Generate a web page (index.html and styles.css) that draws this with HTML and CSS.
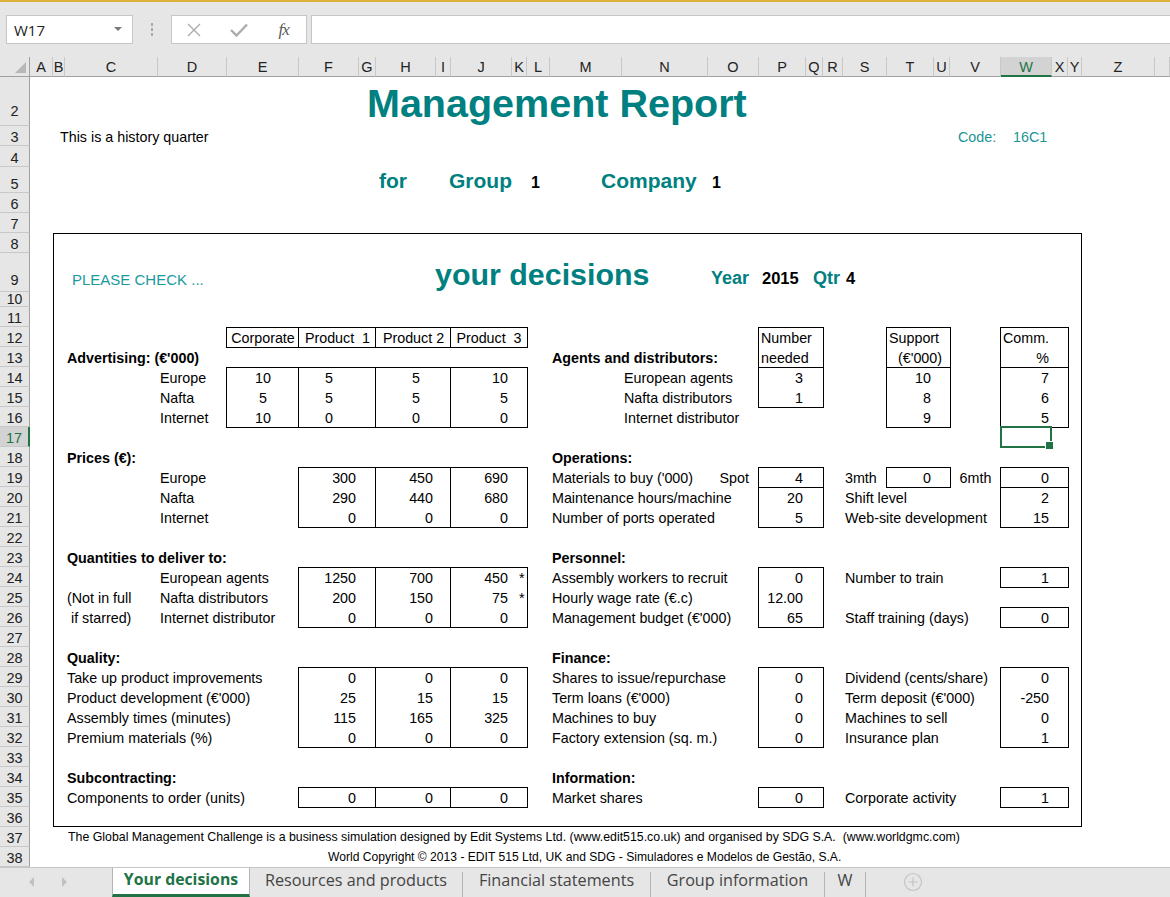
FILE: index.html
```html
<!DOCTYPE html>
<html lang="en">
<head>
<meta charset="utf-8">
<title>Management Report</title>
<link rel="stylesheet" href="styles.css">
</head>
<body>
<div class="app">
  <div class="topbar">
    <div class="namebox"><span>W17</span><svg width="8" height="5" viewBox="0 0 8 5"><polygon points="0,0 8,0 4,4" fill="#7a7a7a"/></svg></div>
    <div class="grip"><i></i><i></i><i></i></div>
    <div class="fxbtns">
      <span class="fxb"><svg width="14" height="14" viewBox="0 0 14 14"><path d="M1 1 L13 13 M13 1 L1 13" stroke="#ababab" stroke-width="1.4" fill="none"/></svg></span>
      <span class="fxb"><svg width="18" height="14" viewBox="0 0 18 14"><path d="M1 7 L6.5 12.5 L17 1.5" stroke="#ababab" stroke-width="2.4" fill="none"/></svg></span>
      <span class="fxb fx">fx</span>
    </div>
    <div class="formula"></div>
  </div>

  <div class="sheet">
    <div class="corner"><svg width="30" height="19" viewBox="0 0 30 19"><polygon points="26,5 26,16 15,16" fill="#b7b7b7"/></svg></div>
    <div class="colheads">
      <div>A</div><div>B</div><div>C</div><div>D</div><div>E</div><div>F</div><div>G</div><div>H</div><div>I</div><div>J</div><div>K</div><div>L</div><div>M</div><div>N</div><div>O</div><div>P</div><div>Q</div><div>R</div><div>S</div><div>T</div><div>U</div><div>V</div><div class="selc">W</div><div>X</div><div>Y</div><div>Z</div><div></div>
    </div>
    <div class="rowheads">
      <div class="rh2">2</div><div>3</div><div>4</div><div>5</div><div>6</div><div>7</div><div>8</div><div class="rh9">9</div><div class="rh10">10</div>
      <div>11</div><div>12</div><div>13</div><div>14</div><div>15</div><div>16</div><div class="selr">17</div><div>18</div><div>19</div><div>20</div>
      <div>21</div><div>22</div><div>23</div><div>24</div><div>25</div><div>26</div><div>27</div><div>28</div><div>29</div><div>30</div>
      <div>31</div><div>32</div><div>33</div><div>34</div><div>35</div><div>36</div><div>37</div><div>38</div>
    </div>

    <div class="cells">
      <div class="bigbox"></div>

      <div class="title">Management Report</div>
      <div class="l r3 cB hist">This is a history quarter</div>
      <div class="l r3 cV code">Code:</div>
      <div class="l r3 cW code c16">16C1</div>

      <div class="big5 cH p-for">for</div>
      <div class="big5 cI p-grp">Group</div>
      <div class="n5 cL">1</div>
      <div class="big5 cM p-cmp">Company</div>
      <div class="n5 cO">1</div>

      <div class="chk">PLEASE CHECK ...</div>
      <div class="yd">your decisions</div>
      <div class="yq cO p-year">Year</div>
      <div class="yn cP p-2015">2015</div>
      <div class="yq cQ p-qtr">Qtr</div>
      <div class="yn cS p-4">4</div>

      <!-- Advertising / Agents -->
      <div class="box hdr4 r12">
        <span class="ctr dv">Corporate</span><span class="ctr dv">Product  1</span><span class="ctr dv">Product 2</span><span class="ctr">Product  3</span>
      </div>
      <div class="box pq r12 h4"><span class="hl">Number</span><span class="hl dvb">needed</span><span>3</span><span>1</span></div>
      <div class="box tu r12 h5"><span class="hl">Support</span><span class="hc dvb">(€'000)</span><span>10</span><span>8</span><span>9</span></div>
      <div class="box wx r12 h5"><span class="hl">Comm.</span><span class="dvb">%</span><span>7</span><span>6</span><span>5</span></div>

      <div class="l hd cC r13">Advertising: (€'000)</div>
      <div class="l hd cM r13">Agents and distributors:</div>
      <div class="l cD r14">Europe</div>
      <div class="l cD r15">Nafta</div>
      <div class="l cD r16">Internet</div>
      <div class="box adv r14 h3">
        <span>10</span><span>5</span><span>5</span><span>10</span>
        <span>5</span><span>5</span><span>5</span><span>5</span>
        <span>10</span><span>0</span><span>0</span><span>0</span>
      </div>
      <div class="l cN r14">European agents</div>
      <div class="l cN r15">Nafta distributors</div>
      <div class="l cN r16">Internet distributor</div>

      <div class="sel cW r17"></div>

      <!-- Prices / Operations -->
      <div class="l hd cC r18">Prices (€):</div>
      <div class="l hd cM r18">Operations:</div>
      <div class="l cD r19">Europe</div>
      <div class="l cD r20">Nafta</div>
      <div class="l cD r21">Internet</div>
      <div class="box p3 r19 h3">
        <span>300</span><span>450</span><span>690</span>
        <span>290</span><span>440</span><span>680</span>
        <span>0</span><span>0</span><span>0</span>
      </div>
      <div class="l cM r19">Materials to buy ('000)</div>
      <div class="l cM r20">Maintenance hours/machine</div>
      <div class="l cM r21">Number of ports operated</div>
      <div class="l cO r19 spot">Spot</div>
      <div class="box pq r19 h3"><span class="dvb">4</span><span>20</span><span>5</span></div>
      <div class="l cS r19">3mth</div>
      <div class="box tu r19"><span>0</span></div>
      <div class="l cV r19 ctr">6mth</div>
      <div class="box wx r19 h3"><span class="dvb">0</span><span>2</span><span>15</span></div>
      <div class="l cS r20">Shift level</div>
      <div class="l cS r21">Web-site development</div>

      <!-- Quantities / Personnel -->
      <div class="l hd cC r23">Quantities to deliver to:</div>
      <div class="l hd cM r23">Personnel:</div>
      <div class="l cC r25">(Not in full</div>
      <div class="l cC r26"> if starred)</div>
      <div class="l cD r24">European agents</div>
      <div class="l cD r25">Nafta distributors</div>
      <div class="l cD r26">Internet distributor</div>
      <div class="box p3 r24 h3">
        <span>1250</span><span>700</span><span class="st">450<i>*</i></span>
        <span>200</span><span>150</span><span class="st">75<i>*</i></span>
        <span>0</span><span>0</span><span>0</span>
      </div>
      <div class="l cM r24">Assembly workers to recruit</div>
      <div class="l cM r25">Hourly wage rate (€.c)</div>
      <div class="l cM r26">Management budget (€'000)</div>
      <div class="box pq r24 h3"><span>0</span><span>12.00</span><span>65</span></div>
      <div class="l cS r24">Number to train</div>
      <div class="l cS r26">Staff training (days)</div>
      <div class="box wx r24"><span>1</span></div>
      <div class="box wx r26"><span>0</span></div>

      <!-- Quality / Finance -->
      <div class="l hd cC r28">Quality:</div>
      <div class="l hd cM r28">Finance:</div>
      <div class="l cC r29">Take up product improvements</div>
      <div class="l cC r30">Product development (€'000)</div>
      <div class="l cC r31">Assembly times (minutes)</div>
      <div class="l cC r32">Premium materials (%)</div>
      <div class="box p3 r29 h4">
        <span>0</span><span>0</span><span>0</span>
        <span>25</span><span>15</span><span>15</span>
        <span>115</span><span>165</span><span>325</span>
        <span>0</span><span>0</span><span>0</span>
      </div>
      <div class="l cM r29">Shares to issue/repurchase</div>
      <div class="l cM r30">Term loans (€'000)</div>
      <div class="l cM r31">Machines to buy</div>
      <div class="l cM r32">Factory extension (sq. m.)</div>
      <div class="box pq r29 h4"><span>0</span><span>0</span><span>0</span><span>0</span></div>
      <div class="l cS r29">Dividend (cents/share)</div>
      <div class="l cS r30">Term deposit (€'000)</div>
      <div class="l cS r31">Machines to sell</div>
      <div class="l cS r32">Insurance plan</div>
      <div class="box wx r29 h4"><span>0</span><span>-250</span><span>0</span><span>1</span></div>

      <!-- Subcontracting / Information -->
      <div class="l hd cC r34">Subcontracting:</div>
      <div class="l hd cM r34">Information:</div>
      <div class="l cC r35">Components to order (units)</div>
      <div class="box p3 r35"><span>0</span><span>0</span><span>0</span></div>
      <div class="l cM r35">Market shares</div>
      <div class="box pq r35"><span>0</span></div>
      <div class="l cS r35">Corporate activity</div>
      <div class="box wx r35"><span>1</span></div>

      <div class="foot foot1">The Global Management Challenge is a business simulation designed by Edit Systems Ltd. (www.edit515.co.uk) and organised by SDG S.A.  (www.worldgmc.com)</div>
      <div class="foot foot2">World Copyright © 2013 - EDIT 515 Ltd, UK and SDG - Simuladores e Modelos de Gestão, S.A.</div>
    </div>
  </div>

  <div class="tabbar">
    <div class="nav">
      <svg width="6" height="10" viewBox="0 0 6 10"><polygon points="5,0 5,10 0,5" fill="#c2c2c2"/></svg>
      <svg width="6" height="10" viewBox="0 0 6 10"><polygon points="1,0 1,10 6,5" fill="#c2c2c2"/></svg>
    </div>
    <div class="tab active">Your decisions</div>
    <div class="tab t-res">Resources and products</div>
    <div class="tab t-fin">Financial statements</div>
    <div class="tab t-grp">Group information</div>
    <div class="tab t-w">W</div>
    <div class="plus"><svg width="20" height="20" viewBox="0 0 20 20"><circle cx="10" cy="10" r="8.5" fill="none" stroke="#c4c4c4" stroke-width="1.2"/><path d="M10 5.5 V14.5 M5.5 10 H14.5" stroke="#c4c4c4" stroke-width="1.2"/></svg></div>
  </div>
</div>
</body>
</html>
```

FILE: styles.css
```css
* { box-sizing: border-box; }
body { margin: 0; background: #fff; }

.app {
  width: 1170px;
  height: 897px;
  overflow: hidden;
  display: flex;
  flex-direction: column;
  font-family: "Liberation Sans", Arial, sans-serif;
}

/* ---------- top formula bar ---------- */
.topbar {
  flex: none;
  height: 57px;
  background: #e6e6e6;
  border-top: 2px solid #dcb23a;
  display: flex;
  align-items: flex-start;
  padding: 13px 0 0 6px;
}
.namebox {
  width: 127px;
  height: 29px;
  background: #fff;
  border: 1px solid #c6c6c6;
  display: flex;
  align-items: center;
  justify-content: space-between;
  padding: 0 10px 0 7px;
  font: 15px "Open Sans", sans-serif;
  color: #222;
}
.grip {
  width: 2px;
  margin: 8px 18px 0 18px;
  display: flex;
  flex-direction: column;
  gap: 2px;
}
.grip i { display: block; width: 2px; height: 3px; background: #a9a9a9; }
.fxbtns {
  width: 136px;
  height: 29px;
  background: #fff;
  border: 1px solid #c6c6c6;
  display: flex;
  align-items: center;
}
.fxb {
  width: 45px;
  display: flex;
  justify-content: center;
  align-items: center;
}
.fx {
  font: italic 17px "Liberation Serif", serif;
  color: #5a5a5a;
  letter-spacing: -1px;
}
.formula {
  flex: 1;
  height: 29px;
  margin-left: 4px;
  background: #fff;
  border: 1px solid #c6c6c6;
  border-right: none;
}

/* ---------- sheet ---------- */
.sheet {
  flex: none;
  height: 810px;
  display: grid;
  grid-template-columns: 30px 1140px;
  grid-template-rows: 20px 790px;
}
.corner {
  background: #e6e6e6;
  border-right: 1px solid #a0a0a0;
  border-bottom: 1px solid #a0a0a0;
}
.corner svg { display: block; }

.colheads {
  display: grid;
  grid-template-columns: 23px 12px 93px 69px 72px 60px 17px 60px 15px 61px 15px 23px 72px 86px 51px 47px 17px 20px 44px 47px 16px 51px 51px 16px 14px 73px 15px;
  background: #e6e6e6;
}
.colheads > div {
  border-right: 1px solid #c8c8c8;
  border-bottom: 1px solid #a0a0a0;
  text-align: center;
  font-size: 14.5px;
  line-height: 20px;
  color: #222;
  overflow: hidden;
}
.colheads > .selc {
  background: #d3d3d3;
  color: #217346;
  border-bottom: 2px solid #217346;
}

.rowheads {
  display: grid;
  grid-template-rows: 49px 20px 21px 26px 20px 20px 20px 39px 15px repeat(28, 20px);
  background: #e6e6e6;
}
.rowheads > div {
  border-right: 1px solid #a0a0a0;
  border-bottom: 1px solid #c8c8c8;
  display: flex;
  align-items: flex-end;
  justify-content: center;
  font-size: 14.5px;
  line-height: 14px;
  padding-bottom: 1px;
  color: #222;
  overflow: hidden;
}
.rowheads > .rh2 { padding-bottom: 7px; }
.rowheads > .rh9 { padding-bottom: 4px; }
.rowheads > .rh10 { padding-bottom: 0; font-size: 14px; line-height: 13px; }
.rowheads > .selr {
  background: #d3d3d3;
  color: #217346;
  border-right: 2px solid #217346;
}

.cells {
  display: grid;
  grid-template-columns:
    [A] 23px [B] 12px [C] 93px [D] 69px [E] 72px [F] 60px [G] 17px [H] 60px [I] 15px
    [J] 61px [K] 15px [L] 23px [M] 72px [N] 86px [O] 51px [P] 47px [Q] 17px [R] 20px
    [S] 44px [T] 47px [U] 16px [V] 51px [W] 51px [X] 16px [Y] 14px [Z] 73px [AA] 15px [END];
  grid-template-rows: 0 49px 20px 21px 26px 20px 20px 20px 39px 15px repeat(28, 20px);
  font-size: 14.3px;
  line-height: 20px;
  color: #000;
  background: #fff;
}

/* column starts */
.cB { grid-column-start: B; }
.cC { grid-column-start: C; }
.cD { grid-column-start: D; }
.cH { grid-column-start: H; }
.cI { grid-column-start: I; }
.cL { grid-column-start: L; }
.cM { grid-column-start: M; }
.cN { grid-column-start: N; }
.cO { grid-column-start: O; }
.cP { grid-column-start: P; }
.cQ { grid-column-start: Q; }
.cS { grid-column-start: S; }
.cV { grid-column-start: V; }
.cW { grid-column-start: W; }

/* row starts */
.r3 { grid-row-start: 3; }
.r12 { grid-row-start: 12; }
.r13 { grid-row-start: 13; }
.r14 { grid-row-start: 14; }
.r15 { grid-row-start: 15; }
.r16 { grid-row-start: 16; }
.r17 { grid-row-start: 17; }
.r18 { grid-row-start: 18; }
.r19 { grid-row-start: 19; }
.r20 { grid-row-start: 20; }
.r21 { grid-row-start: 21; }
.r23 { grid-row-start: 23; }
.r24 { grid-row-start: 24; }
.r25 { grid-row-start: 25; }
.r26 { grid-row-start: 26; }
.r28 { grid-row-start: 28; }
.r29 { grid-row-start: 29; }
.r30 { grid-row-start: 30; }
.r31 { grid-row-start: 31; }
.r32 { grid-row-start: 32; }
.r34 { grid-row-start: 34; }
.r35 { grid-row-start: 35; }
.h3 { grid-row-end: span 3; }
.h4 { grid-row-end: span 4; }
.h5 { grid-row-end: span 5; }

/* plain cell text */
.l {
  white-space: pre;
  padding: 1px 0 0 2px;
}
.hd { font-weight: bold; }
.ctr { text-align: center; padding-left: 0; }
.spot { text-align: right; padding-right: 10px; }

.bigbox {
  grid-column: B / Z;
  grid-row: 8 / 37;
  outline: 1px solid #000;
  outline-offset: -1px;
}

.title {
  grid-column-start: G;
  grid-row-start: 2;
  align-self: end;
  padding-left: 8px;
  white-space: nowrap;
  font-weight: bold;
  font-size: 39.5px;
  line-height: normal;
  color: #008080;
}
.hist { padding-left: 7px; }
.code { color: #1a9494; padding-left: 8px; }
.c16 { padding-left: 12px; }

.big5 {
  grid-row-start: 5;
  align-self: end;
  white-space: nowrap;
  font-weight: bold;
  font-size: 21px;
  line-height: normal;
  color: #008080;
}
.p-for { padding-left: 3px; }
.p-grp { padding-left: 13px; }
.p-cmp { padding-left: 51px; }
.n5 {
  grid-row-start: 5;
  align-self: end;
  padding: 0 0 1px 4px;
  font-weight: bold;
  font-size: 16px;
  line-height: normal;
}

.chk {
  grid-column-start: C;
  grid-row-start: 9;
  align-self: end;
  white-space: nowrap;
  padding: 0 0 4px 7px;
  font-size: 15px;
  line-height: normal;
  color: #1a9a9e;
}
.yd {
  grid-column-start: H;
  grid-row-start: 9;
  align-self: end;
  white-space: nowrap;
  padding-left: 59px;
  font-weight: bold;
  font-size: 30.4px;
  line-height: normal;
  color: #008080;
}
.yq, .yn {
  grid-row-start: 9;
  align-self: end;
  white-space: nowrap;
  font-weight: bold;
  line-height: normal;
  padding-bottom: 3px;
}
.yq { font-size: 18px; color: #008080; }
.yn { font-size: 16.5px; color: #000; padding-bottom: 4px; }
.p-year { padding-left: 3px; }
.p-2015 { padding-left: 3px; }
.p-qtr { padding-left: 7px; }
.p-4 { padding-left: 3px; }

/* ---------- bordered input boxes ---------- */
.box {
  outline: 1px solid #000;
  margin-top: 1px;
  display: grid;
  grid-template-columns: minmax(0, 1fr);
  grid-auto-rows: 20px;
  white-space: pre;
}
.box > span { text-align: right; }
.dv { box-shadow: inset -1px 0 0 #000; }
.box > .dvb { box-shadow: inset 0 -1px 0 #000; }

.hdr4, .adv {
  grid-column: E / L;
  grid-template-columns: 72px 77px 75px 76px;
}
.box > .ctr { text-align: center; }
.adv > span:nth-child(4n+1) { text-align: center; box-shadow: inset -1px 0 0 #000; }
.adv > span:nth-child(4n+2) { text-align: center; padding-right: 17px; box-shadow: inset -1px 0 0 #000; }
.adv > span:nth-child(4n+3) { text-align: center; padding-left: 5px; box-shadow: inset -1px 0 0 #000; }
.adv > span:nth-child(4n) { padding-right: 19px; }

.p3 {
  grid-column: F / L;
  grid-template-columns: 77px 75px 76px;
}
.p3 > span:nth-child(3n+1) { padding-right: 20px; box-shadow: inset -1px 0 0 #000; }
.p3 > span:nth-child(3n+2) { padding-right: 18px; box-shadow: inset -1px 0 0 #000; }
.p3 > span:nth-child(3n) { padding-right: 19px; }
.p3 > span.st { padding-right: 0; }
.st i {
  font-style: normal;
  display: inline-block;
  width: 19px;
  padding-left: 11px;
  text-align: left;
}

.pq { grid-column: P / R; }
.tu { grid-column: T / V; }
.wx { grid-column: W / Y; }
.pq > span { padding-right: 20px; }
.tu > span, .wx > span { padding-right: 19px; }
.box > .hl { text-align: left; padding: 0 0 0 2px; }
.box > .hc { text-align: center; padding: 0 0 0 3px; }

.sel {
  border: 2px solid #217346;
  margin: -1px 0 -1px -1px;
  position: relative;
}
.sel::after {
  content: "";
  position: absolute;
  right: -4px;
  bottom: -4px;
  width: 7px;
  height: 7px;
  background: #217346;
  border: 1px solid #fff;
}

.foot {
  white-space: pre;
  font-size: 12.35px;
  line-height: 20px;
}
.foot1 { grid-column-start: C; grid-row-start: 37; padding-left: 3px; }
.foot2 { grid-column-start: B; grid-row-start: 38; padding-left: 275px; font-size: 12.1px; }

/* ---------- sheet tabs ---------- */
.tabbar {
  flex: none;
  height: 30px;
  background: #e6e6e6;
  border-top: 1px solid #c6c6c6;
  display: flex;
  align-items: stretch;
  font-family: "Open Sans", sans-serif;
}
.nav {
  width: 112px;
  display: flex;
  align-items: center;
  gap: 26px;
  padding: 0 0 2px 29px;
}
.nav svg { display: block; }
.tab {
  margin-top: 4px;
  border-right: 1px solid #b4b4b4;
  display: flex;
  align-items: center;
  justify-content: center;
  padding-bottom: 9px;
  font-size: 16.2px;
  color: #444;
  white-space: nowrap;
}
.tab.active {
  margin-top: 0;
  width: 138px;
  background: #fff;
  border-left: 1px solid #b4b4b4;
  border-bottom: 3px solid #217346;
  padding-bottom: 4px;
  color: #217346;
  font-weight: bold;
  font-size: 15.8px;
}
.t-res { width: 213px; }
.t-fin { width: 188px; }
.t-grp { width: 174px; }
.t-w { width: 41px; }
.plus {
  margin-left: 37px;
  display: flex;
  align-items: center;
  padding-bottom: 2px;
}
.plus svg { display: block; }
```
